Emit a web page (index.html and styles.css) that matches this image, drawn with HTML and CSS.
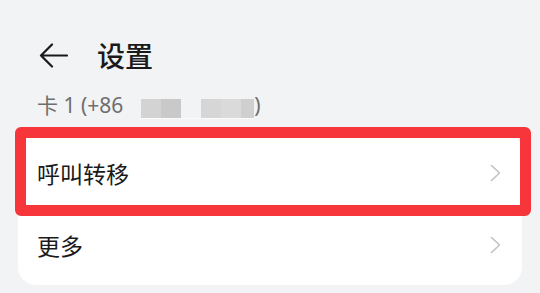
FILE: index.html
```html
<!DOCTYPE html>
<html lang="zh-CN">
<head>
<meta charset="utf-8">
<link rel="stylesheet" href="styles.css">
</head>
<body>
<div class="page">
  <div class="header">
    <svg class="back" width="29" height="25" viewBox="0 0 29 25">
      <path d="M13 1.5 L2 12.5 L13 23.5 M2 12.5 H28" fill="none" stroke="#1a1a1a" stroke-width="2.2" stroke-linecap="round" stroke-linejoin="round"/>
    </svg>
    <div class="title">设置</div>
  </div>
  <div class="sub">
    <span class="sub-text">卡 1 (+86</span>
    <span class="mask">
      <span class="blk b1"></span><span class="blk b2"></span><span class="gapblk"></span><span class="blk b3"></span><span class="blk b4"></span><span class="blk b5"></span>
    </span>
    <span class="sub-text">)</span>
  </div>
  <div class="card">
    <div class="row">
      <span class="label">呼叫转移</span>
      <svg class="chev" width="11" height="18" viewBox="0 0 11 18"><path d="M1.5 1.5 L9.5 9 L1.5 16.5" fill="none" stroke="#c2c2c2" stroke-width="1.6" stroke-linecap="round" stroke-linejoin="round"/></svg>
    </div>
    <div class="row">
      <span class="label">更多</span>
      <svg class="chev" width="11" height="18" viewBox="0 0 11 18"><path d="M1.5 1.5 L9.5 9 L1.5 16.5" fill="none" stroke="#c2c2c2" stroke-width="1.6" stroke-linecap="round" stroke-linejoin="round"/></svg>
    </div>
  </div>
  <div class="highlight"></div>
</div>
</body>
</html>
```
FILE: styles.css
```css
html, body {
  margin: 0;
  padding: 0;
  background: #f1f3f5;
}
body {
  width: 540px;
  height: 293px;
  overflow: hidden;
  font-family: Roboto, "Noto Sans", "Noto Sans CJK SC", sans-serif;
}
.page {
  position: relative;
  height: 293px;
}
.header {
  display: flex;
  align-items: center;
  height: 60px;
  padding-top: 25px;
  padding-left: 39px;
}
.back {
  display: block;
  flex: none;
}
.title {
  margin-left: 29px;
  font-family: "Noto Sans CJK SC", sans-serif;
  font-size: 28px;
  font-weight: 500;
  color: #1a1a1a;
  line-height: 36px;
}
.sub {
  display: flex;
  align-items: center;
  height: 24px;
  margin-top: 8px;
  padding-left: 37px;
  font-family: "Noto Sans", "Noto Sans CJK SC", sans-serif;
  font-size: 21px;
  color: #6e6e6e;
  line-height: 24px;
}
.sub-text {
  white-space: pre;
}
.mask {
  display: flex;
  height: 19px;
  margin-left: 18px;
  margin-top: 7px;
  border-bottom: 1px solid #fbfbfc;
}
.blk {
  display: block;
  height: 19px;
}
.b1 { width: 20px; background: #d3d3d4; }
.b2 { width: 20px; background: #c9c9ca; }
.gapblk { width: 20px; }
.b3 { width: 20px; background: #d6d6d7; }
.b4 { width: 20px; background: #dadadb; }
.b5 { width: 13px; background: #cfcfd0; }
.card {
  margin: 16px 18px 0;
  background: #ffffff;
  border-radius: 18px;
  padding: 4px 0;
}
.row {
  display: flex;
  align-items: center;
  justify-content: space-between;
  height: 72px;
  padding: 0 21px 0 19px;
}
.label {
  font-family: "Noto Sans CJK SC", sans-serif;
  font-size: 23px;
  color: #1a1a1a;
}
.chev {
  display: block;
}
.highlight {
  position: absolute;
  left: 15px;
  top: 127px;
  width: 516px;
  height: 89px;
  box-sizing: border-box;
  border: 11px solid #f7363b;
  border-radius: 6px;
}
```
